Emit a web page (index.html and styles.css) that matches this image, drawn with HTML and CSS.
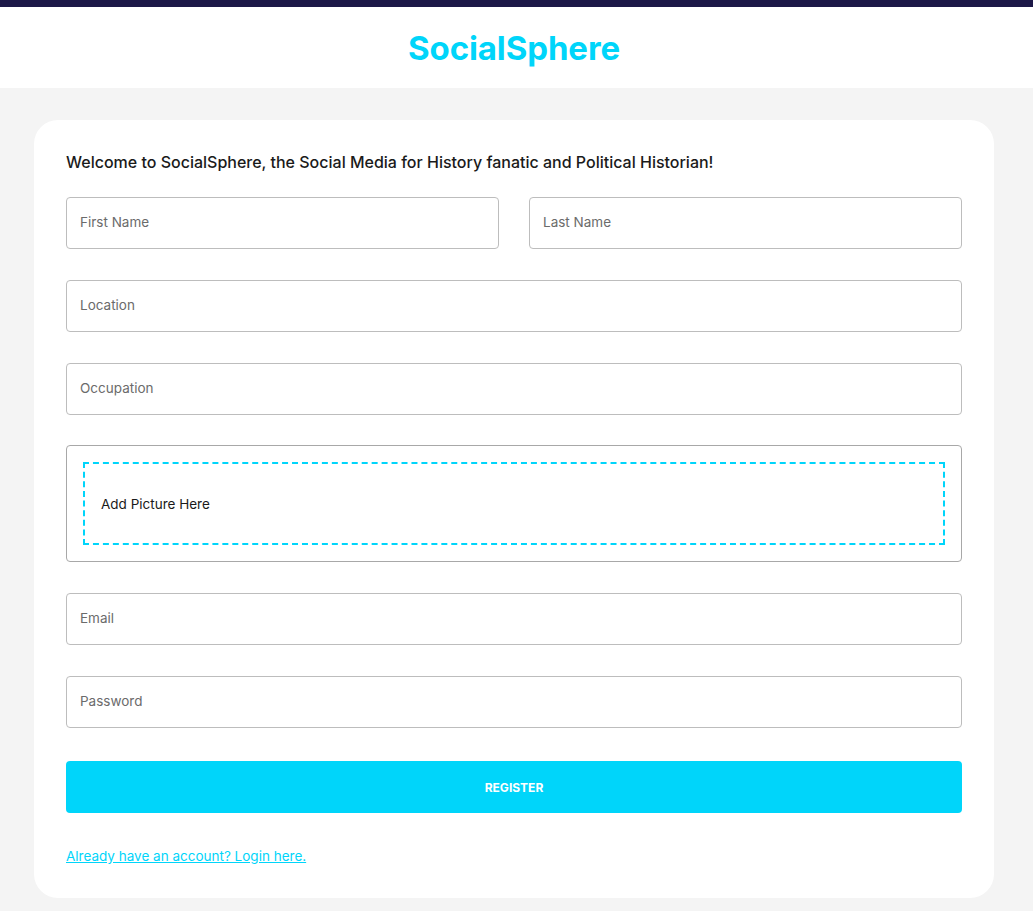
FILE: index.html
```html
<!DOCTYPE html>
<html lang="en">
<head>
<meta charset="utf-8">
<title>SocialSphere</title>
<link rel="stylesheet" href="styles.css">
</head>
<body>
<div class="topbar"></div>
<header class="header">
  <h1 class="logo">SocialSphere</h1>
</header>
<main class="page">
  <section class="card">
    <p class="welcome">Welcome to SocialSphere, the Social Media for History fanatic and Political Historian!</p>
    <form class="form">
      <input class="field" type="text" placeholder="First Name">
      <input class="field" type="text" placeholder="Last Name">
      <input class="field wide" type="text" placeholder="Location">
      <input class="field wide" type="text" placeholder="Occupation">
      <div class="dropbox wide">
        <div class="dropzone">Add Picture Here</div>
      </div>
      <input class="field wide" type="email" placeholder="Email">
      <input class="field wide" type="password" placeholder="Password">
      <button class="register wide" type="button">REGISTER</button>
    </form>
    <a class="login" href="#">Already have an account? Login here.</a>
  </section>
</main>
</body>
</html>
```

FILE: styles.css
```css
* { box-sizing: border-box; }
html, body { margin: 0; padding: 0; }
body {
  background: #f4f4f4;
  font-family: "Inter", "Roboto", sans-serif;
  color: #1a1a1a;
}
.topbar {
  height: 7px;
  background: #1d1848;
}
.header {
  background: #ffffff;
  height: 81px;
  display: flex;
  align-items: center;
  justify-content: center;
}
.logo {
  margin: 0 5px 0 0;
  font-size: 33px;
  font-weight: 700;
  color: #00d5fa;
  letter-spacing: -0.1px;
}
.page {
  padding: 32px 34px 14px 34px;
}
.card {
  max-width: 960px;
  background: #ffffff;
  border-radius: 24px;
  padding: 32px 32px 33px 32px;
}
.welcome {
  margin: 0 0 25px 0;
  font-size: 16px;
  font-weight: 500;
  line-height: 20px;
  color: #1a1a1a;
}
.form {
  display: grid;
  grid-template-columns: 1fr 1fr;
  column-gap: 30px;
  row-gap: 31px;
}
.wide { grid-column: 1 / -1; }
.field {
  height: 52px;
  border: 1px solid #bdbdbd;
  border-radius: 4px;
  padding: 0 13px 2px 13px;
  font-family: inherit;
  font-size: 13.5px;
  color: #333;
  background: #fff;
  outline: none;
}
.field::placeholder { color: #6b6b6b; }
.dropbox {
  margin-top: -1px;
  border: 1px solid #a8a8a8;
  border-radius: 4px;
  padding: 16px;
  height: 117px;
}
.dropzone {
  height: 100%;
  border: 2px dashed #00d5fa;
  display: flex;
  align-items: center;
  padding: 0 16px;
  font-size: 13.5px;
  color: #1a1a1a;
}
.register {
  margin-top: 2px;
  height: 52px;
  border: none;
  border-radius: 4px;
  background: #00d5fa;
  color: #ffffff;
  font-family: inherit;
  font-size: 12px;
  font-weight: 700;
}
.login {
  display: inline-block;
  margin-top: 34px;
  font-size: 13.5px;
  line-height: 18px;
  color: #00d5fa;
}
```
